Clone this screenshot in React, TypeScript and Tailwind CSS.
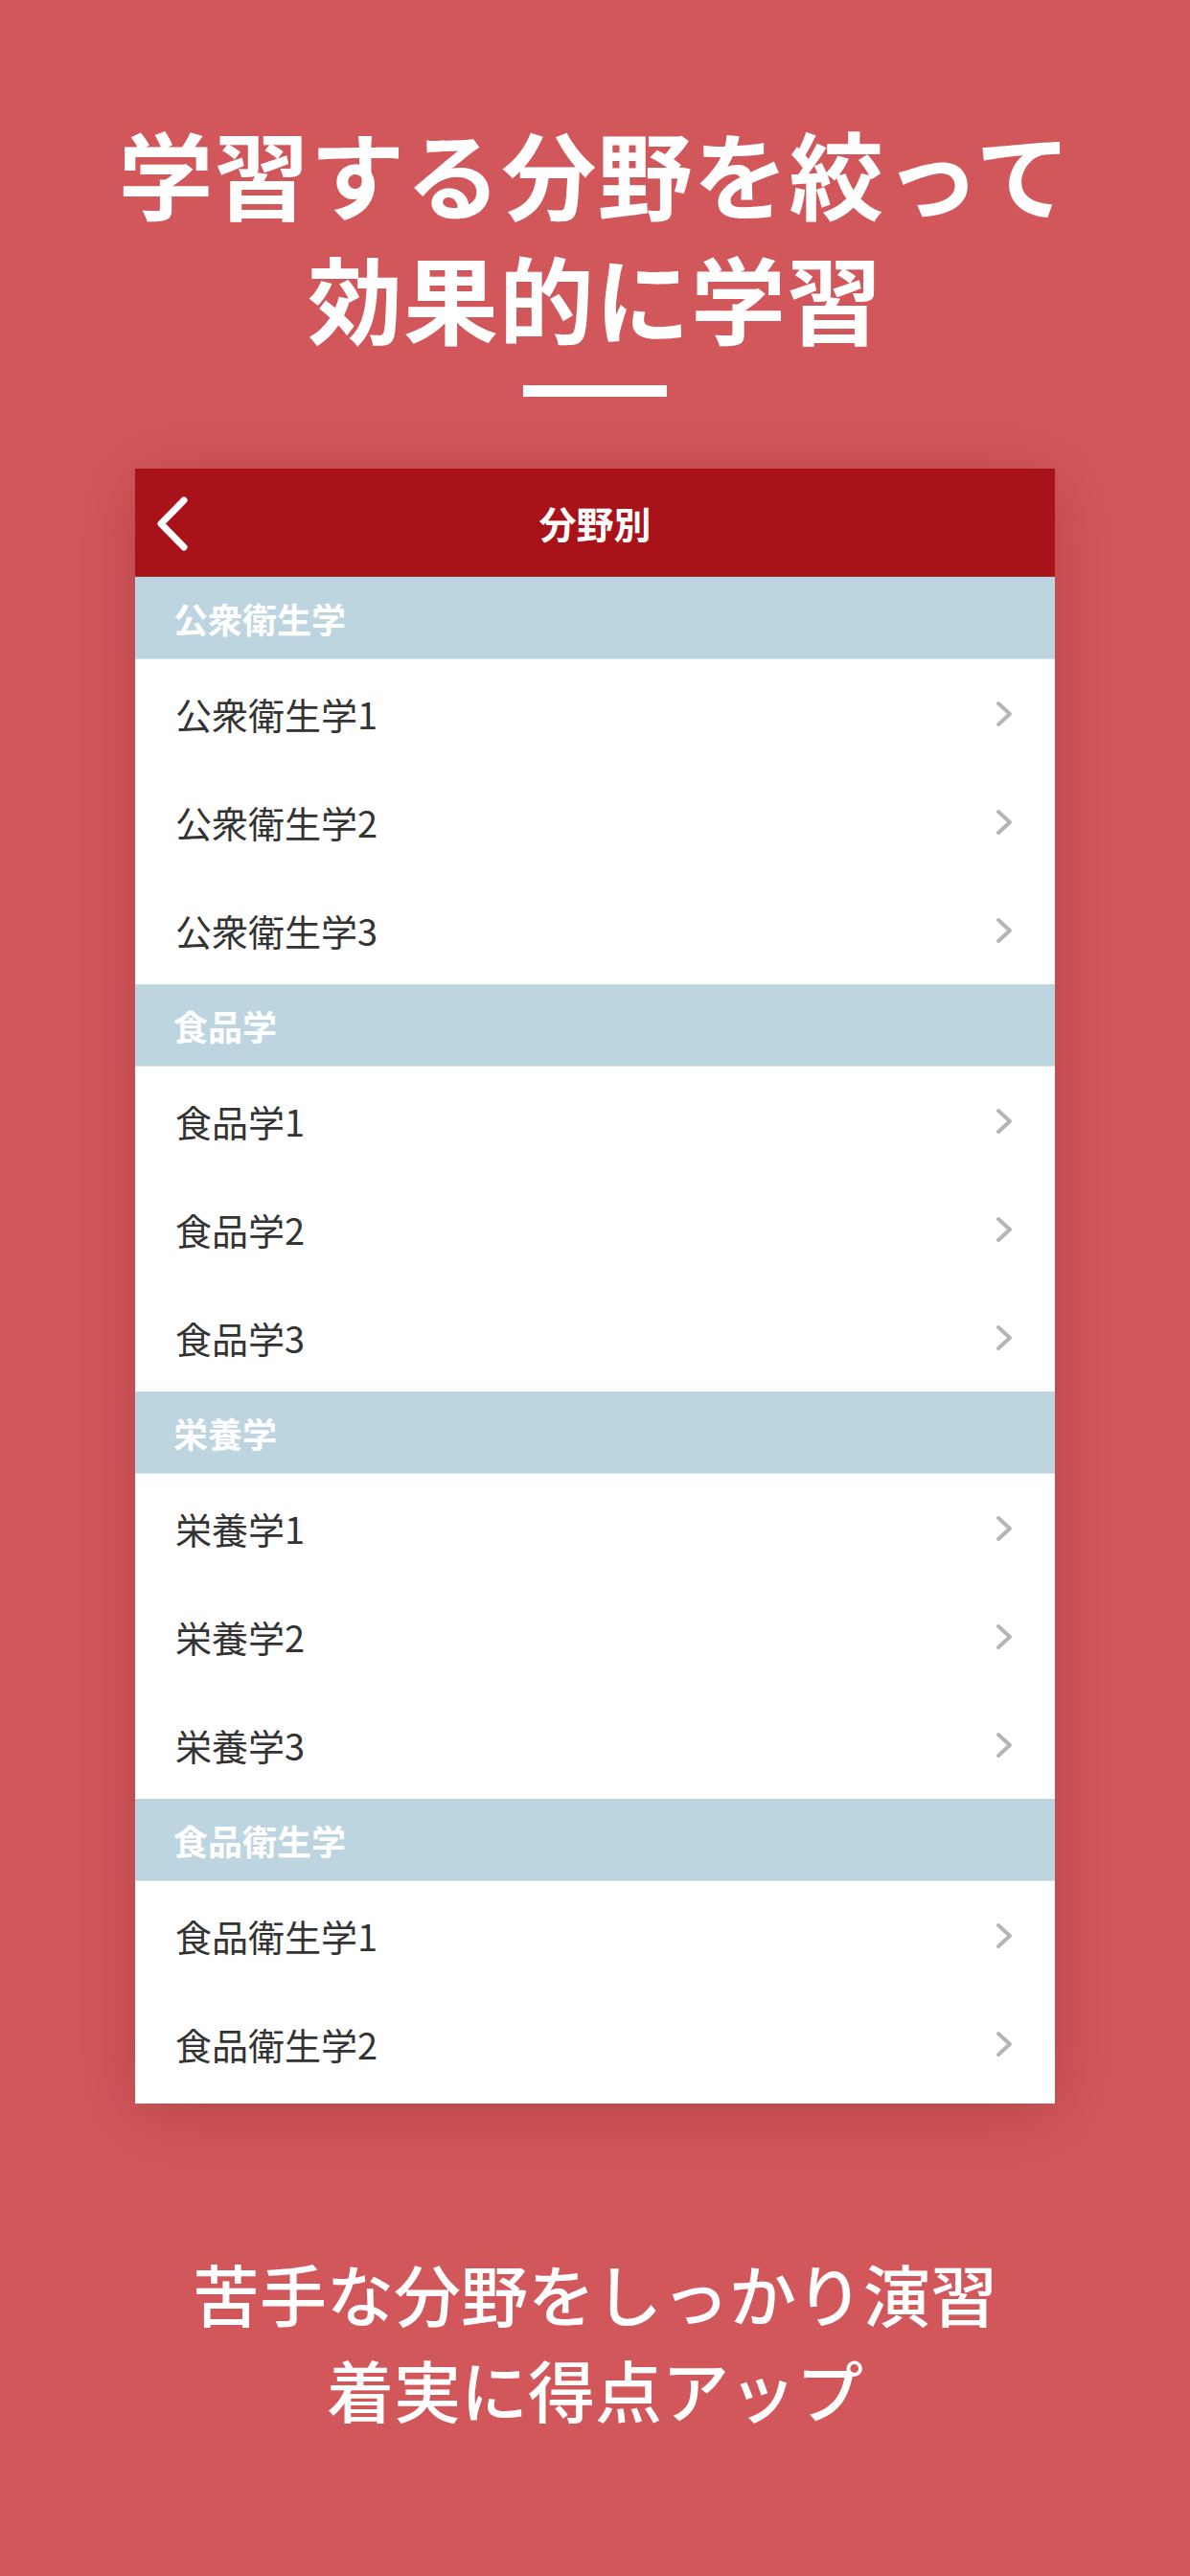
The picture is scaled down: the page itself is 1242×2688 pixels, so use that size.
import { Fragment } from "react";

const sections = [
  { title: "公衆衛生学", items: ["公衆衛生学1", "公衆衛生学2", "公衆衛生学3"] },
  { title: "食品学", items: ["食品学1", "食品学2", "食品学3"] },
  { title: "栄養学", items: ["栄養学1", "栄養学2", "栄養学3"] },
  { title: "食品衛生学", items: ["食品衛生学1", "食品衛生学2"] },
];

const jp = "font-['Hiragino_Sans','Noto_Sans_CJK_JP',sans-serif]";

export default function App() {
  return (
    <div className={`w-[1242px] h-[2688px] bg-[#d2575b] flex flex-col items-center ${jp}`}>
      {/* 見出し */}
      <h1 className="pt-[114px] text-center text-white font-bold text-[99px] leading-[130px] tracking-[1px]">
        学習する分野を絞って
        <br />
        効果的に学習
      </h1>
      <div className="mt-[28px] w-[150px] h-[12px] bg-white" />

      {/* 画面イメージ */}
      <div className="mt-[75px] w-[960px] bg-white shadow-[0_10px_70px_rgba(80,0,0,0.22)] pb-[6px]">
        <div className="relative h-[113px] bg-[#aa121a] border-b border-[#8c3a3e] flex items-center justify-center">
          <svg
            className="absolute left-[22px] top-[29px]"
            width="34"
            height="57"
            viewBox="0 0 34 57"
            fill="none"
          >
            <polyline
              points="29,4 5,28.5 29,53"
              stroke="white"
              strokeWidth="7"
              strokeLinecap="round"
              strokeLinejoin="round"
            />
          </svg>
          <span className="text-white font-bold text-[39px]">分野別</span>
        </div>

        {sections.map((s) => (
          <Fragment key={s.title}>
            <div className="h-[86px] bg-[#bdd5e0] border-b border-[#d6e5ec] flex items-center px-[40px]">
              <span className="text-white font-semibold text-[36px]">{s.title}</span>
            </div>
            {s.items.map((item) => (
              <div key={item} className="h-[113px] flex items-center justify-between pl-[42px] pr-[44px]">
                <span className="text-[#333333] text-[38px]">{item}</span>
                <svg width="18" height="28" viewBox="0 0 18 28" fill="none">
                  <polyline
                    points="3,3 15,14 3,25"
                    stroke="#b5b5b5"
                    strokeWidth="4"
                    strokeLinecap="round"
                    strokeLinejoin="round"
                  />
                </svg>
              </div>
            ))}
          </Fragment>
        ))}
      </div>

      {/* 説明文 */}
      <p className="mt-[148px] text-center text-white font-medium text-[70px] leading-[100px]">
        苦手な分野をしっかり演習
        <br />
        着実に得点アップ
      </p>
    </div>
  );
}
